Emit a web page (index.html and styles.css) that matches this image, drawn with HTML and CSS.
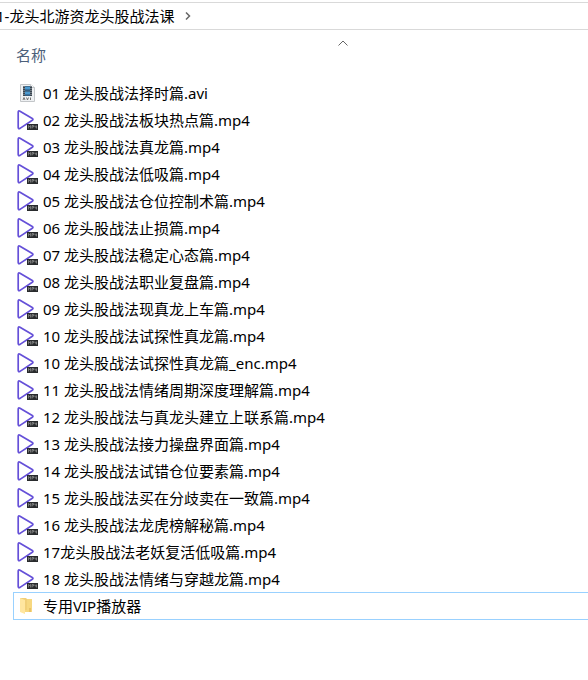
FILE: index.html
```html
<!DOCTYPE html>
<html lang="zh-CN">
<head>
<meta charset="utf-8">
<meta name="viewport" content="width=device-width, initial-scale=1">
<title>龙头北游资龙头股战法课</title>
<link rel="stylesheet" href="styles.css">
</head>
<body>
<svg class="sprite" aria-hidden="true">
  <symbol id="mp4" viewBox="0 0 22 22">
    <path d="M2.200 3.200Q2.200 1.200 4 2.200L16.300 9.500Q17.600 10.400 16.300 11.300L4 19.400Q2.200 20.200 2.200 18.600Z" fill="#fff" stroke="#6550d8" stroke-width="1.7" stroke-linejoin="round"/>
    <path d="M11 15h11v6H11z" fill="#292b2d"/>
    <path d="M12.500 19.500v-3l1 1 1-1v3M16 19.500v-3h1.500v1.500H16M19 16.500v1.500h1.500M20.500 16.500v3" fill="none" stroke="#aaa" stroke-width=".6"/>
  </symbol>
  <symbol id="avi" viewBox="0 0 22 22">
    <path d="M4.500 2.500h10l4 3v14h-14z" fill="#eff1f3" stroke="#c3c6c9" stroke-width="1"/>
    <path d="M14.500 2.500v3h4" fill="#fff" stroke="#b8bcc0" stroke-width=".8"/>
    <path d="M7 4h9v10H7z" fill="#394550"/>
    <path d="M9 4.500h5v4H9zM9 9.500h5v4H9z" fill="#4c9ad0"/>
    <path d="M9 7.500h5v1H9zM9 12.500h5v1H9z" fill="#254d70"/>
    <path d="M8 4v10M15 4v10" stroke="#c5ccd2" stroke-width=".8" stroke-dasharray="1 1"/>
    <path d="M7 18l1-2.500 1 2.500M10.500 15.500l1 2.500 1-2.500M14.500 15.500v2.500" fill="none" stroke="#666" stroke-width=".9"/>
  </symbol>
  <symbol id="folder" viewBox="0 0 22 22">
    <path d="M4 3h6l1 1h5v13H4z" fill="#f1cf78"/>
    <path d="M4 3l5 2v14l-5-2z" fill="#ffe6a0"/>
    <path d="M9 15h2V4h5v13H9z" fill="#f7d880"/>
    <path d="M13 13h2v4h-2z" fill="#e9c368"/>
  </symbol>
</svg>
<nav class="path" aria-label="路径">
  <a class="crumb" href="#">1-龙头北游资龙头股战法课</a>
  <svg class="next" viewBox="0 0 6 8" aria-hidden="true"><path d="M1 .5L4.500 4 1 7.500"/></svg>
</nav>
<main>
  <table class="files">
    <thead>
      <tr><th scope="col"><button class="sort" type="button">名称<svg class="up" viewBox="0 0 12 6" aria-hidden="true"><path d="M1.500 5.500L6 1l4.500 4.500"/></svg></button></th></tr>
    </thead>
    <tbody>
      <tr><td><a class="file" href="#"><svg class="icon"><use href="#avi"/></svg>01 龙头股战法择时篇.avi</a></td></tr>
      <tr><td><a class="file" href="#"><svg class="icon"><use href="#mp4"/></svg>02 龙头股战法板块热点篇.mp4</a></td></tr>
      <tr><td><a class="file" href="#"><svg class="icon"><use href="#mp4"/></svg>03 龙头股战法真龙篇.mp4</a></td></tr>
      <tr><td><a class="file" href="#"><svg class="icon"><use href="#mp4"/></svg>04 龙头股战法低吸篇.mp4</a></td></tr>
      <tr><td><a class="file" href="#"><svg class="icon"><use href="#mp4"/></svg>05 龙头股战法仓位控制术篇.mp4</a></td></tr>
      <tr><td><a class="file" href="#"><svg class="icon"><use href="#mp4"/></svg>06 龙头股战法止损篇.mp4</a></td></tr>
      <tr><td><a class="file" href="#"><svg class="icon"><use href="#mp4"/></svg>07 龙头股战法稳定心态篇.mp4</a></td></tr>
      <tr><td><a class="file" href="#"><svg class="icon"><use href="#mp4"/></svg>08 龙头股战法职业复盘篇.mp4</a></td></tr>
      <tr><td><a class="file" href="#"><svg class="icon"><use href="#mp4"/></svg>09 龙头股战法现真龙上车篇.mp4</a></td></tr>
      <tr><td><a class="file" href="#"><svg class="icon"><use href="#mp4"/></svg>10 龙头股战法试探性真龙篇.mp4</a></td></tr>
      <tr><td><a class="file" href="#"><svg class="icon"><use href="#mp4"/></svg>10 龙头股战法试探性真龙篇_enc.mp4</a></td></tr>
      <tr><td><a class="file" href="#"><svg class="icon"><use href="#mp4"/></svg>11 龙头股战法情绪周期深度理解篇.mp4</a></td></tr>
      <tr><td><a class="file" href="#"><svg class="icon"><use href="#mp4"/></svg>12 龙头股战法与真龙头建立上联系篇.mp4</a></td></tr>
      <tr><td><a class="file" href="#"><svg class="icon"><use href="#mp4"/></svg>13 龙头股战法接力操盘界面篇.mp4</a></td></tr>
      <tr><td><a class="file" href="#"><svg class="icon"><use href="#mp4"/></svg>14 龙头股战法试错仓位要素篇.mp4</a></td></tr>
      <tr><td><a class="file" href="#"><svg class="icon"><use href="#mp4"/></svg>15 龙头股战法买在分歧卖在一致篇.mp4</a></td></tr>
      <tr><td><a class="file" href="#"><svg class="icon"><use href="#mp4"/></svg>16 龙头股战法龙虎榜解秘篇.mp4</a></td></tr>
      <tr><td><a class="file" href="#"><svg class="icon"><use href="#mp4"/></svg>17龙头股战法老妖复活低吸篇.mp4</a></td></tr>
      <tr><td><a class="file" href="#"><svg class="icon"><use href="#mp4"/></svg>18 龙头股战法情绪与穿越龙篇.mp4</a></td></tr>
      <tr><td><a class="file focused" href="#"><svg class="icon"><use href="#folder"/></svg>专用VIP播放器</a></td></tr>
    </tbody>
  </table>
</main>
</body>
</html>
```
FILE: styles.css
```css
* {
  box-sizing: border-box;
}

body {
  margin: 0;
  padding-top: 2px;
  overflow-x: hidden;
  background: #fff;
  color: #000;
  font: 15px/20px "Noto Sans", "Noto Sans CJK SC", sans-serif;
}

a {
  color: inherit;
  text-decoration: none;
}

.sprite {
  position: absolute;
  width: 0;
  height: 0;
}

.path {
  display: flex;
  align-items: center;
  gap: 11px;
  height: 28px;
  padding-bottom: 1px;
  border-top: 1px solid #d9d9d9;
  border-bottom: 1px solid #d9d9d9;
}

.crumb {
  margin-left: -4px;
  white-space: nowrap;
}

.next,
.up {
  fill: none;
  stroke: #666;
}

.next {
  width: 6px;
  height: 8px;
  stroke-width: 1.5;
}

.files {
  width: 100%;
  border-collapse: collapse;
}

.files th,
.files td {
  padding: 0 0 0 13px;
}

.files th {
  font-weight: 400;
}

.sort {
  position: relative;
  display: block;
  width: 100%;
  height: 49px;
  padding: 0 3px;
  border: 0;
  background: none;
  color: #4c607a;
  font: inherit;
  text-align: left;
}

.up {
  position: absolute;
  top: 10px;
  left: 324px;
  width: 12px;
  height: 6px;
}

.file {
  display: flex;
  align-items: center;
  gap: 5px;
  height: 27px;
  padding-left: 2px;
  border: 1px solid transparent;
  border-right: 0;
  white-space: nowrap;
}

.file.focused {
  height: 28px;
  border-color: #99d1ff;
}

.icon {
  flex: none;
  width: 22px;
  height: 22px;
}
```
